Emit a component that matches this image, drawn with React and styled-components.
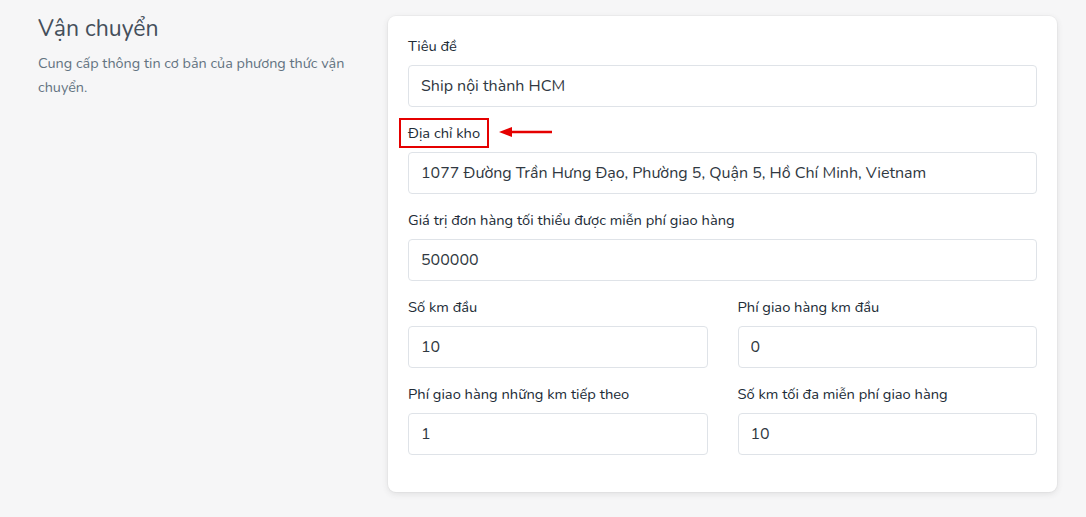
import React from "react";
import styled, { createGlobalStyle } from "styled-components";

const GlobalStyle = createGlobalStyle`
  body {
    margin: 0;
    background: #f6f6f7;
    font-family: "Nunito", Lato, "Noto Sans", sans-serif;
    color: #212b36;
  }
`;

const Page = styled.div`
  display: flex;
  gap: 30px;
  padding: 16px 29px 26px 38px;
  min-height: 517px;
  box-sizing: border-box;
`;

const Aside = styled.div`
  flex: 0 0 320px;
`;

const Heading = styled.h2`
  margin: 0 0 9px;
  font-size: 23px;
  line-height: 26px;
  font-weight: 400;
  color: #454f5b;
`;

const Description = styled.p`
  margin: 0;
  font-size: 14.4px;
  line-height: 24px;
  color: #637381;
`;

const Card = styled.div`
  flex: 1;
  align-self: flex-start;
  background: #fff;
  border-radius: 8px;
  padding: 20px 20px 21px;
  box-shadow: 0 0 0 1px rgba(63, 63, 68, 0.03), 0 2px 6px rgba(63, 63, 68, 0.12);
`;

const Row = styled.div`
  display: grid;
  grid-template-columns: 1fr 1fr;
  column-gap: 30px;
`;

const Field = styled.div`
  margin-bottom: 16px;
`;

const Label = styled.label`
  display: block;
  margin-bottom: 9px;
  font-size: 14.7px;
  line-height: 20px;
  color: #212b36;
`;

const Highlight = styled.span`
  display: inline;
  margin-left: -9px;
  padding: 3px 7px;
  border: 2px solid #e50000;
`;

const Arrow = styled.svg`
  vertical-align: middle;
  margin-left: 10px;
  margin-top: -4px;
`;

const Input = styled.input`
  display: block;
  width: 100%;
  box-sizing: border-box;
  height: 42px;
  padding: 0 12px;
  border: 1px solid #dfe3e8;
  border-radius: 4px;
  font-family: inherit;
  font-size: 16px;
  color: #303841;
  background: #fff;
  outline: none;
`;

function FormField({ label, value, marked }) {
  return (
    <Field>
      <Label>
        {marked ? <Highlight>{label}</Highlight> : label}
        {marked && (
          <Arrow width="54" height="12" viewBox="0 0 54 12">
            <path d="M12 6H53" stroke="#e50000" strokeWidth="2.5" />
            <path d="M0 6L13 1V11Z" fill="#e50000" />
          </Arrow>
        )}
      </Label>
      <Input defaultValue={value} readOnly />
    </Field>
  );
}

export default function App() {
  return (
    <>
      <GlobalStyle />
      <Page>
        <Aside>
          <Heading>Vận chuyển</Heading>
          <Description>
            Cung cấp thông tin cơ bản của phương thức vận chuyển.
          </Description>
        </Aside>
        <Card>
          <FormField label="Tiêu đề" value="Ship nội thành HCM" />
          <FormField
            label="Địa chỉ kho"
            value="1077 Đường Trần Hưng Đạo, Phường 5, Quận 5, Hồ Chí Minh, Vietnam"
            marked
          />
          <FormField
            label="Giá trị đơn hàng tối thiểu được miễn phí giao hàng"
            value="500000"
          />
          <Row>
            <FormField label="Số km đầu" value="10" />
            <FormField label="Phí giao hàng km đầu" value="0" />
          </Row>
          <Row>
            <FormField label="Phí giao hàng những km tiếp theo" value="1" />
            <FormField label="Số km tối đa miễn phí giao hàng" value="10" />
          </Row>
        </Card>
      </Page>
    </>
  );
}
